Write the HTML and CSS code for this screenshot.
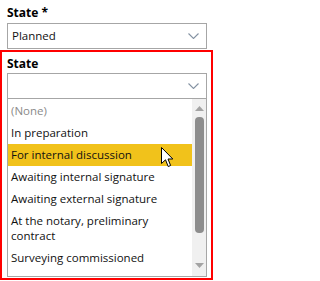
FILE: index.html
```html
<!DOCTYPE html>
<html>
<head>
<meta charset="utf-8">
<link rel="stylesheet" href="styles.css">
</head>
<body>
<div class="page">
  <div class="field">
    <div class="label">State *</div>
    <div class="select">
      <span class="value">Planned</span>
      <svg class="chev" width="11" height="6" viewBox="0 0 11 6"><polyline points="0.5,0.5 5.5,5.5 10.5,0.5" fill="none" stroke="#8593a3" stroke-width="1.1"/></svg>
    </div>
  </div>
  <div class="field focus">
    <div class="label">State</div>
    <div class="select open">
      <span class="value"></span>
      <svg class="chev" width="11" height="6" viewBox="0 0 11 6"><polyline points="0.5,0.5 5.5,5.5 10.5,0.5" fill="none" stroke="#8593a3" stroke-width="1.1"/></svg>
    </div>
    <div class="listbox">
      <ul class="items">
        <li class="item none">(None)</li>
        <li class="item">In preparation</li>
        <li class="item selected">For internal discussion</li>
        <li class="item">Awaiting internal signature</li>
        <li class="item">Awaiting external signature</li>
        <li class="item">At the notary, preliminary contract</li>
        <li class="item">Surveying commissioned</li>
      </ul>
      <div class="scrollbar">
        <svg class="arrow" width="9" height="5" viewBox="0 0 9 5"><polygon points="0,5 4.5,0 9,5" fill="#a3a3a3"/></svg>
        <div class="track"><div class="thumb"></div></div>
        <svg class="arrow" width="9" height="5" viewBox="0 0 9 5"><polygon points="0,0 4.5,5 9,0" fill="#a3a3a3"/></svg>
      </div>
    </div>
  </div>
  <svg class="cursor" width="13" height="21" viewBox="0 0 13 21"><path d="M0.5,0.5 L0.5,16.5 L4.5,12.8 L7.2,19.5 L9.6,18.5 L7,12 L11.8,12 Z" fill="#fff" stroke="#000" stroke-width="1" stroke-linejoin="miter"/></svg>
</div>
</body>
</html>
```

FILE: styles.css
```css
html, body {
  margin: 0;
  padding: 0;
  background: #fff;
}
body {
  font-family: "Open Sans", "Noto Sans", sans-serif;
  font-size: 11.5px;
  color: #111;
}
.page {
  position: relative;
  width: 219px;
  height: 281px;
  overflow: hidden;
}
.field {
  padding: 4px 12px 0 7px;
}
.label {
  font-weight: bold;
  font-size: 12px;
  line-height: 17px;
  height: 19px;
  color: #000;
}
.select {
  box-sizing: border-box;
  width: 200px;
  height: 26px;
  border: 1px solid #a6a6a6;
  display: flex;
  align-items: center;
  justify-content: space-between;
  padding: 0 7px 0 4px;
}
.value {
  line-height: 16px;
}
.chev {
  display: block;
}
.focus {
  margin-top: 1px;
  width: 213px;
  height: 230px;
  box-sizing: border-box;
  border: 2px solid #f00;
  padding: 3px 4px 1px 5px;
}
.focus .label {
  height: 18px;
}
.listbox {
  box-sizing: border-box;
  width: 200px;
  height: 179px;
  margin-top: -1px;
  border: 1px solid #a6a6a6;
  display: flex;
  overflow: hidden;
}
.items {
  list-style: none;
  margin: 0;
  padding: 1px 0 0;
  flex: 1;
  min-width: 0;
}
.item {
  padding: 3px 4px 4px 3px;
  line-height: 15px;
}
.item.none {
  color: #8a8a8a;
}
.item.selected {
  background: #f1c21b;
}
.scrollbar {
  width: 14px;
  background: #f0f0f0;
  display: flex;
  flex-direction: column;
  align-items: center;
  padding: 7px 0 8px;
  box-sizing: border-box;
}
.arrow {
  display: block;
}
.track {
  flex: 1;
  width: 100%;
  display: flex;
  justify-content: center;
  padding: 6px 0 0;
  box-sizing: border-box;
}
.thumb {
  width: 9px;
  height: 116px;
  background: #8d8d8d;
  border-radius: 4px;
}
.cursor {
  position: absolute;
  left: 161px;
  top: 147px;
}
```
